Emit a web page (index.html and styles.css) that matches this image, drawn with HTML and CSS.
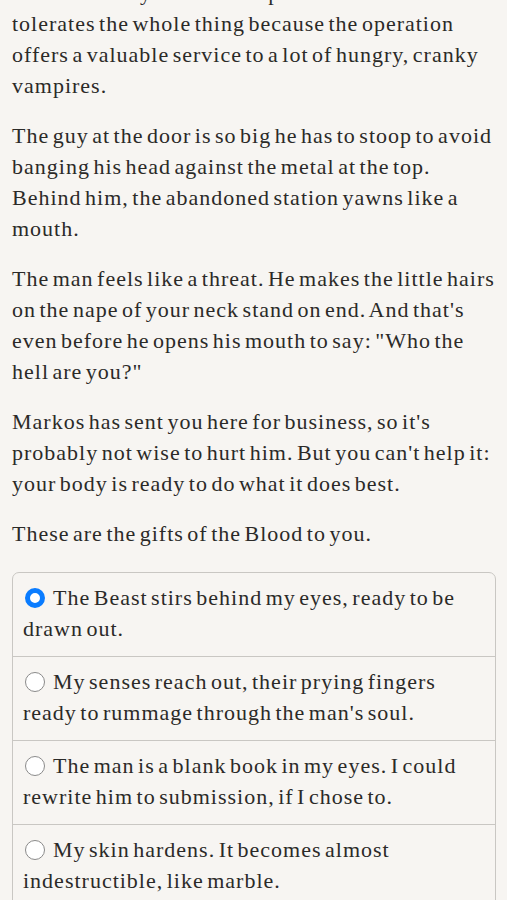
FILE: index.html
```html
<!DOCTYPE html>
<html lang="en">
<head>
<meta charset="utf-8">
<title>Story</title>
<link rel="stylesheet" href="styles.css">
</head>
<body>
<main class="story">
  <p class="para first">The whole city knows. The prince knows it too and tolerates the whole thing because the operation offers a valuable service to a lot of hungry, cranky vampires.</p>
  <p class="para">The guy at the door is so big he has to stoop to avoid banging his head against the metal at the top. Behind him, the abandoned station yawns like a mouth.</p>
  <p class="para">The man feels like a threat. He makes the little hairs on the nape of your neck stand on end. And that's even before he opens his mouth to say: "Who the hell are you?"</p>
  <p class="para">Markos has sent you here for business, so it's probably not wise to hurt him. But you can't help it: your body is ready to do what it does best.</p>
  <p class="para">These are the gifts of the Blood to you.</p>
  <div class="choices">
    <label class="choice"><span class="radio checked"></span>The Beast stirs behind my eyes, ready to be drawn out.</label>
    <label class="choice"><span class="radio"></span>My senses reach out, their prying fingers ready to rummage through the man's soul.</label>
    <label class="choice"><span class="radio"></span>The man is a blank book in my eyes. I could rewrite him to submission, if I chose to.</label>
    <label class="choice"><span class="radio"></span>My skin hardens. It becomes almost indestructible, like marble.</label>
  </div>
</main>
</body>
</html>
```
FILE: styles.css
```css
html, body {
  margin: 0;
  padding: 0;
  background: #f7f5f2;
}
body {
  font-family: "Liberation Serif", "DejaVu Serif", serif;
  font-size: 22px;
  line-height: 31px;
  color: #2b2a28;
  overflow: hidden;
}
.story {
  padding: 0 11px 0 12px;
  letter-spacing: 1px;
  word-spacing: -3px;
}
.para {
  margin: 0 0 19px;
}
.para.first {
  margin-top: -23px;
}
.choices {
  margin-top: 23px;
  border: 1px solid #c9c7c3;
  border-radius: 7px;
  overflow: hidden;
}
.choice {
  display: block;
  padding: 9px 20px 12px 10px;
  border-top: 1px solid #c9c7c3;
}
.choice:first-child {
  border-top: none;
}
.radio {
  display: inline-block;
  box-sizing: border-box;
  width: 20px;
  height: 20px;
  border-radius: 50%;
  border: 1.5px solid #8a8a8a;
  background: #fff;
  vertical-align: -3px;
  margin: 0 8px 0 2px;
}
.radio.checked {
  border: 5px solid #0a7cff;
  background: #fff;
}
```
